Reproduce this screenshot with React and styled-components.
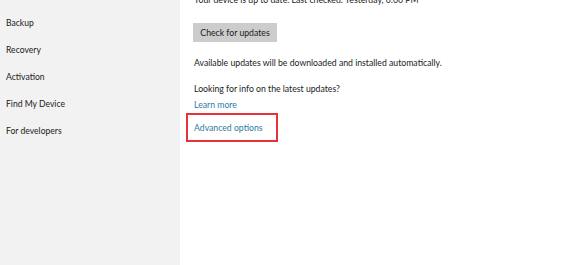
import React from "react";
import styled, { createGlobalStyle } from "styled-components";

const Global = createGlobalStyle`
  html, body { margin: 0; padding: 0; background: #fff; }
  body { font-family: "Lato", "Open Sans", sans-serif; }
`;

const Page = styled.div`
  display: flex;
  width: 575px;
  height: 265px;
  overflow: hidden;
`;

const Sidebar = styled.nav`
  width: 180px;
  flex: none;
  background: #f2f2f2;
  padding-top: 10px;
  box-sizing: border-box;
  display: flex;
  flex-direction: column;
`;

const NavItem = styled.div`
  height: 27px;
  line-height: 27px;
  padding-left: 6px;
  font-size: 8.6px;
  color: #1a1a1a;
`;

const Content = styled.main`
  flex: 1;
  padding-left: 14px;
  display: flex;
  flex-direction: column;
  align-items: flex-start;
  margin-top: -8px;
`;

const Text = styled.p`
  margin: ${(p) => p.$mt || 0}px 0 0;
  font-size: 8.7px;
  line-height: 16px;
  color: #1a1a1a;
`;

const Button = styled.button`
  margin-top: ${(p) => p.$mt || 0}px;
  margin-left: -1px;
  height: 19px;
  width: 84px;
  border: none;
  background: #cccccc;
  font-family: inherit;
  font-size: 8.7px;
  font-weight: 400;
  color: #1a1a1a;
  padding: 0;
`;

const Link = styled.a`
  display: block;
  margin-top: ${(p) => p.$mt || 0}px;
  font-size: 8.7px;
  line-height: 16px;
  color: #2f7aa6;
  text-decoration: none;
`;

const Highlight = styled.div`
  margin-top: 0;
  margin-left: -8px;
  width: 92px;
  height: 29px;
  box-sizing: border-box;
  border: 2px solid #e8323a;
  padding-left: 6px;
  display: flex;
  align-items: center;
`;

export default function App() {
  return (
    <Page>
      <Global />
      <Sidebar>
        <NavItem>Backup</NavItem>
        <NavItem>Recovery</NavItem>
        <NavItem>Activation</NavItem>
        <NavItem>Find My Device</NavItem>
        <NavItem>For developers</NavItem>
      </Sidebar>
      <Content>
        <Text>Your device is up to date. Last checked: Yesterday, 6:06 PM</Text>
        <Button $mt={15}>Check for updates</Button>
        <Text $mt={13}>Available updates will be downloaded and installed automatically.</Text>
        <Text $mt={10}>Looking for info on the latest updates?</Text>
        <Link $mt={0}>Learn more</Link>
        <Highlight>
          <Link>Advanced options</Link>
        </Highlight>
      </Content>
    </Page>
  );
}
